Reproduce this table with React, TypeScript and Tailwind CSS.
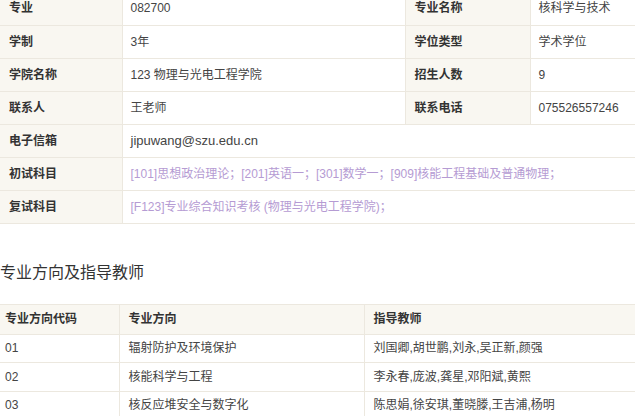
import React from "react";

const font = { fontFamily: '"Liberation Sans", "Noto Sans CJK SC", sans-serif' };

function Label({ children }: { children: React.ReactNode }) {
  return (
    <td className="bg-[#f9f7f1] border-b border-r border-[#ece8df] pl-[9px] text-[#333] font-bold align-middle">
      {children}
    </td>
  );
}
function Val({ children, span, purple }: { children: React.ReactNode; span?: number; purple?: boolean }) {
  return (
    <td
      colSpan={span}
      className={`bg-white border-b border-r border-[#ece8df] pl-[8px] align-middle ${purple ? "text-[#b59bd3]" : "text-[#444]"}`}
    >
      {children}
    </td>
  );
}

export default function App() {
  return (
    <div className="w-[635px] h-[416px] overflow-hidden bg-white text-[12px]" style={font}>
      <div className="-mt-[8px]">
        <table className="w-[635px] border-collapse table-fixed">
          <colgroup>
            <col className="w-[122px]" />
            <col className="w-[283px]" />
            <col className="w-[125px]" />
            <col className="w-[105px]" />
          </colgroup>
          <tbody>
            <tr className="h-[33px]">
              <Label>专业</Label>
              <Val>082700</Val>
              <Label>专业名称</Label>
              <Val>核科学与技术</Val>
            </tr>
            <tr className="h-[33px]">
              <Label>学制</Label>
              <Val>3年</Val>
              <Label>学位类型</Label>
              <Val>学术学位</Val>
            </tr>
            <tr className="h-[33px]">
              <Label>学院名称</Label>
              <Val>123 物理与光电工程学院</Val>
              <Label>招生人数</Label>
              <Val>9</Val>
            </tr>
            <tr className="h-[33px]">
              <Label>联系人</Label>
              <Val>王老师</Val>
              <Label>联系电话</Label>
              <Val>075526557246</Val>
            </tr>
            <tr className="h-[33px]">
              <Label>电子信箱</Label>
              <Val span={3}>
                <span className="text-[13px]">jipuwang@szu.edu.cn</span>
              </Val>
            </tr>
            <tr className="h-[33px]">
              <Label>初试科目</Label>
              <Val span={3} purple>
                [101]思想政治理论；[201]英语一；[301]数学一；[909]核能工程基础及普通物理；
              </Val>
            </tr>
            <tr className="h-[33px]">
              <Label>复试科目</Label>
              <Val span={3} purple>
                [F123]专业综合知识考核 (物理与光电工程学院)；
              </Val>
            </tr>
          </tbody>
        </table>

        <h2 className="mt-[38px] mb-[20px] text-[16px] leading-[22px] text-[#333]">专业方向及指导教师</h2>

        <table className="w-[635px] border-collapse table-fixed">
          <colgroup>
            <col className="w-[119px]" />
            <col className="w-[245px]" />
            <col className="w-[271px]" />
          </colgroup>
          <thead>
            <tr className="h-[30px] bg-[#f9f7f1] text-[#333] font-bold">
              <th className="text-left font-bold pl-[5px] border-t border-b border-r border-[#ece8df]">专业方向代码</th>
              <th className="text-left font-bold pl-[9px] border-t border-b border-r border-[#ece8df]">专业方向</th>
              <th className="text-left font-bold pl-[9px] border-t border-b border-[#ece8df]">指导教师</th>
            </tr>
          </thead>
          <tbody className="text-[#444]">
            {[
              ["01", "辐射防护及环境保护", "刘国卿,胡世鹏,刘永,吴正新,颜强"],
              ["02", "核能科学与工程", "李永春,庞波,龚星,邓阳斌,黄熙"],
              ["03", "核反应堆安全与数字化", "陈思娟,徐安琪,董晓滕,王吉浦,杨明"],
            ].map((r) => (
              <tr key={r[0]} className="h-[28.5px]">
                <td className="pl-[5px] border-b border-r border-[#ece8df]">{r[0]}</td>
                <td className="pl-[9px] border-b border-r border-[#ece8df]">{r[1]}</td>
                <td className="pl-[9px] border-b border-[#ece8df]">{r[2]}</td>
              </tr>
            ))}
          </tbody>
        </table>
      </div>
    </div>
  );
}
